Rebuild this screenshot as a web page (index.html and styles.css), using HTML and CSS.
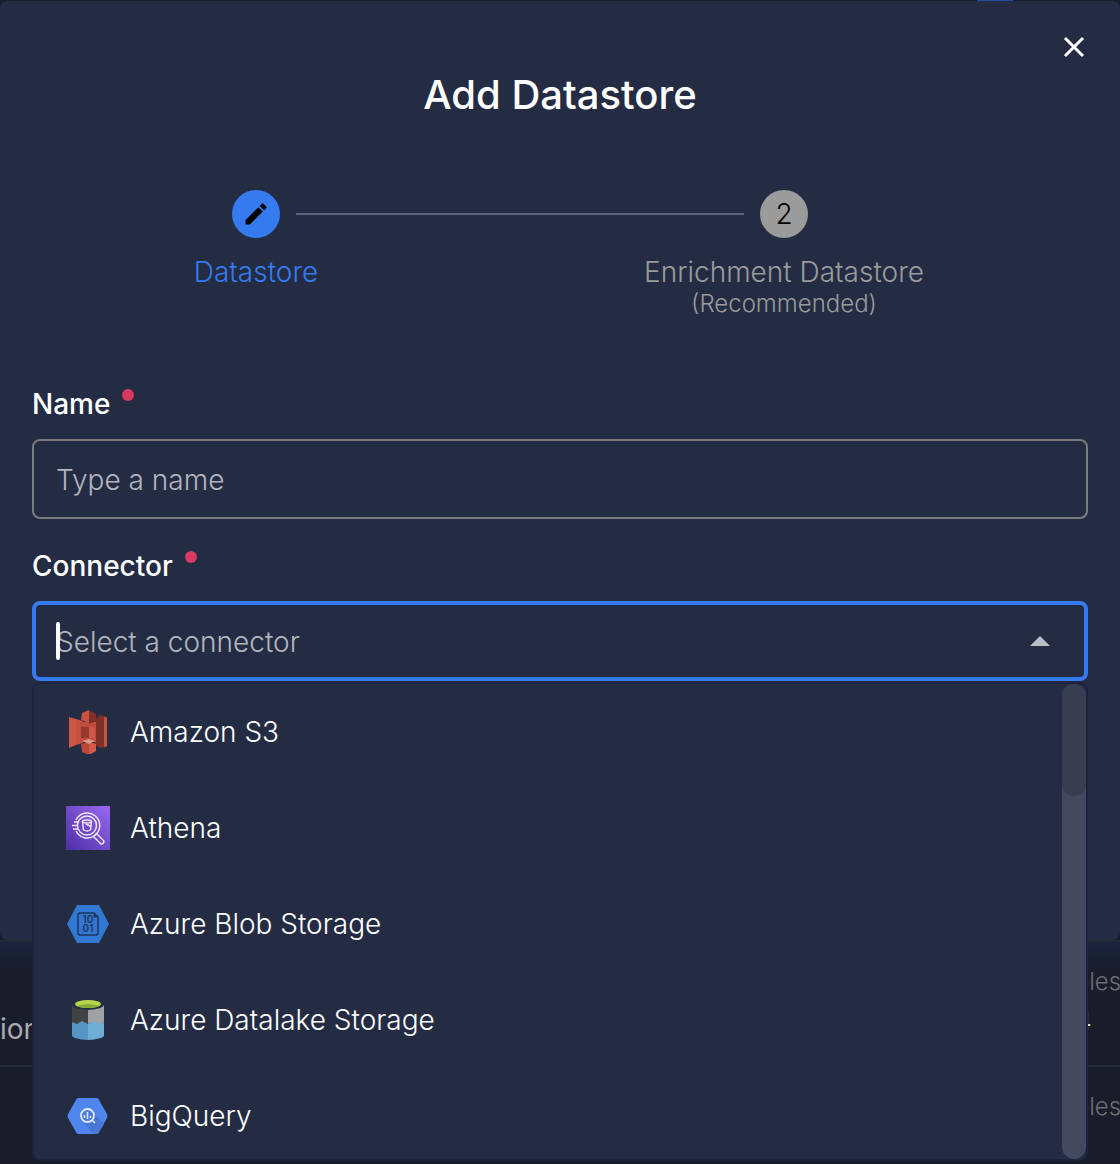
FILE: index.html
```html
<!DOCTYPE html>
<html lang="en">
<head>
<meta charset="utf-8">
<meta name="viewport" content="width=device-width, initial-scale=1">
<title>Add Datastore</title>
<link rel="stylesheet" href="styles.css">
</head>
<body>
<div class="toolbar" aria-hidden="true"><span class="toolbar-action"></span></div>
<main class="dialog" role="dialog" aria-labelledby="dialog-title">
  <header class="dialog-header">
    <button class="close" type="button" aria-label="Close">
      <svg viewBox="0 0 24 24" width="24" height="24"><path d="M3 3L21 21M21 3L3 21" fill="none" stroke="#fff" stroke-width="3"/></svg>
    </button>
    <h1 class="title" id="dialog-title">Add Datastore</h1>
  </header>

  <ol class="stepper">
    <li class="step step-active">
      <div class="step-track">
        <span class="step-side"></span>
        <span class="step-badge">
          <svg viewBox="0 0 24 24" width="28" height="28"><path d="M20.71 7.04c.39-.39.39-1.04 0-1.41l-2.34-2.34c-.37-.39-1.02-.39-1.41 0l-1.84 1.83 3.75 3.75M3 17.25V21h3.75L17.81 9.93l-3.75-3.75L3 17.25z"/></svg>
        </span>
        <span class="step-side step-line"></span>
      </div>
      <span class="step-name">Datastore</span>
    </li>
    <li class="step">
      <div class="step-track">
        <span class="step-side step-line"></span>
        <span class="step-badge">2</span>
        <span class="step-side"></span>
      </div>
      <span class="step-name">Enrichment Datastore</span>
      <span class="step-note">(Recommended)</span>
    </li>
  </ol>

  <form class="form">
    <div class="field">
      <label class="label" for="name">Name<span class="required"></span></label>
      <input class="input" id="name" type="text" placeholder="Type a name">
    </div>
    <div class="field">
      <label class="label" for="connector">Connector<span class="required"></span></label>
      <div class="combo">
        <input class="input input-focused" id="connector" type="text" role="combobox" aria-expanded="true" aria-controls="connector-list" placeholder="Select a connector">
        <span class="caret"></span>
        <svg class="arrow" viewBox="0 0 20 10" width="20" height="10"><path d="M0 10L10 0L20 10z" fill="#bdbfc7"/></svg>
        <div class="menu">
          <ul class="options" id="connector-list">
            <li><button class="option" type="button">
              <svg viewBox="0 0 44 44" width="44" height="44">
                <path d="M3 7L10 9V35L3 38z" fill="#cc5745"/><path d="M10 9L17 11V33L10 35z" fill="#c45040"/>
                <path d="M41 7L34 5L28 10V34L34 38L41 37z" fill="#7d3028"/><path d="M38 7L41 8V36L38 37z" fill="#ca5442"/>
                <path d="M14 12H30V32H14z" fill="#c04d3d"/>
                <path d="M16 3L23 0V13L15 10z" fill="#c95140"/><path d="M23 0L30 4V11L23 14z" fill="#7e3029"/>
                <path d="M15 17H23V28H15z" fill="#96382e"/><path d="M23 16L29 18V28H23z" fill="#ce5947"/>
                <path d="M15 34L23 32V45L16 42z" fill="#b84739"/><path d="M23 32L30 34V41L23 45z" fill="#d15b48"/>
                <path d="M16 31L23 29L29 31L23 34z" fill="#dc9588"/>
              </svg><span>Amazon S3</span></button></li>
            <li><button class="option" type="button">
              <svg viewBox="0 0 44 44" width="44" height="44">
                <defs><linearGradient id="athena" x1="0" y1="1" x2="1" y2="0"><stop offset="0" stop-color="#4d2fa5"/><stop offset="1" stop-color="#9b68f0"/></linearGradient></defs>
                <rect width="44" height="44" fill="url(#athena)"/>
                <g fill="none" stroke="#f1eafd" stroke-width="1.4">
                  <path d="M10 14A12.5 12.5 0 1 1 10 25"/><circle cx="21" cy="19.500" r="9.500"/>
                  <path d="M8 16H12M6 19.500H11M7 23H12"/>
                  <path d="M27.500 30.500L30.500 27.500L38 35Q38 38 35 38z"/>
                  <ellipse cx="21" cy="15.500" rx="4.500" ry="1.500"/><path d="M16.500 15.500L17.500 24Q21 26 24.500 24L25.500 15.500M20 18L25 20.500"/>
                </g>
              </svg><span>Athena</span></button></li>
            <li><button class="option" type="button">
              <svg viewBox="0 0 44 44" width="44" height="44">
                <path d="M11 3H33L43 22L33 41H11L1 22z" fill="#3278d2"/>
                <path d="M14 11H28L32 15V31Q32 33 30 33H14Q12 33 12 31V13Q12 11 14 11z" fill="none" stroke="#20345e" stroke-width="1.500"/>
                <path d="M28 11V15H32z" fill="#20345e" stroke="#20345e"/>
                <text class="bits" x="22" y="21" text-anchor="middle">10</text><text class="bits" x="22" y="30" text-anchor="middle">01</text>
              </svg><span>Azure Blob Storage</span></button></li>
            <li><button class="option" type="button">
              <svg viewBox="0 0 44 44" width="44" height="44">
                <path d="M6 7Q7 11 22 12V27L16 24L11 26L6 24z" fill="#424242"/><path d="M22 12Q37 11 38 7V24L34 27L28 24L22 26z" fill="#a0a1a2"/>
                <path d="M6 24L11 26L16 23L22 26V42Q8 41 6 38z" fill="#5495c3"/><path d="M22 26L28 23L34 26L38 24V38Q36 41 22 42z" fill="#6eaed3"/>
                <ellipse cx="22" cy="6" rx="13" ry="4" fill="#b8d34c"/><path d="M11 8Q22 4 33 8Q29 10 22 10Q15 10 11 8" fill="#88ad36"/>
              </svg><span>Azure Datalake Storage</span></button></li>
            <li><button class="option" type="button">
              <svg viewBox="0 0 44 44" width="44" height="44">
                <path d="M12 4H31Q32 4 33 6L41 20Q42 22 41 24L33 38Q32 40 31 40H12Q11 40 10 38L2 24Q1 22 2 20L10 6Q11 4 12 4z" fill="#5085ee"/>
                <path d="M26 17L38 30L33 38Q32 40 31 40H27L17 28z" fill="#4877d6"/>
                <circle cx="21.500" cy="21.500" r="6.500" fill="#4a7ce0" stroke="#e4ecfc" stroke-width="1.800"/>
                <path d="M26 26L29 29M18.500 21V24M21.500 18V25M24.500 22V24" fill="none" stroke="#e4ecfc" stroke-width="1.500"/>
              </svg><span>BigQuery</span></button></li>
          </ul>
          <div class="scrollbar"><div class="thumb"></div></div>
        </div>
      </div>
    </div>
  </form>
</main>
<section class="listing" aria-hidden="true">
  <div class="row">
    <span class="row-name">ion</span>
    <span class="row-stats"><span class="row-key">Tables</span><span class="row-value">4</span></span>
  </div>
  <div class="row">
    <span></span>
    <span class="row-stats"><span class="row-key">Tables</span></span>
  </div>
</section>
</body>
</html>
```
FILE: styles.css
```css
* {
  box-sizing: border-box;
}

body {
  margin: 0;
  min-height: 100vh;
  overflow: hidden;
  background: #191c2a;
  color: #fff;
  font-family: Inter, "Liberation Sans", sans-serif;
  font-size: 28px;
  font-weight: 300;
  line-height: 32px;
}

button,
input {
  font: inherit;
  color: inherit;
}

ol,
ul {
  margin: 0;
  padding: 0;
  list-style: none;
}

.toolbar {
  display: flex;
  justify-content: flex-end;
  height: 1px;
  padding-right: 107px;
}

.toolbar-action {
  width: 36px;
  background: #1f4f9b;
}

.dialog {
  display: flow-root;
  min-height: 939px;
  padding: 0 32px;
  border-radius: 8px;
  background: #242c44;
}

.dialog-header {
  display: flex;
  flex-direction: column;
  padding-top: 34px;
}

.close {
  display: flex;
  align-self: flex-end;
  margin-right: 2px;
  padding: 0;
  border: 0;
  background: none;
}

.title {
  margin: 12px 0 0;
  font-size: 40px;
  font-weight: 500;
  line-height: 48px;
  text-align: center;
}

.stepper {
  display: grid;
  grid-template-columns: 1fr 1fr;
  margin: 71px 40px 0 -40px;
}

.step {
  display: flex;
  flex-direction: column;
  color: #9b9b9b;
  text-align: center;
}

.step-active {
  color: #357bef;
}

.step-track {
  display: flex;
  align-items: center;
  gap: 16px;
  margin-bottom: 18px;
}

.step-side {
  flex: 1;
}

.step-line {
  height: 2px;
  background: #5f6578;
}

.step-badge {
  display: flex;
  align-items: center;
  justify-content: center;
  width: 48px;
  height: 48px;
  border-radius: 50%;
  background: #9b9b9b;
  color: #000;
}

.step-active .step-badge {
  background: #357bef;
}

.step-note {
  font-size: 24px;
}

.form {
  display: flex;
  flex-direction: column;
  gap: 31px;
  margin-top: 68px;
}

.label {
  display: flex;
  gap: 12px;
  margin-bottom: 19px;
  font-weight: 500;
}

.required {
  width: 12px;
  height: 12px;
  margin-top: 1px;
  border-radius: 50%;
  background: #d83a64;
}

.input {
  display: block;
  width: 100%;
  height: 80px;
  padding: 2px 22px 0;
  border: 2px solid #7c7c7e;
  border-radius: 8px;
  outline: none;
  background: transparent;
}

.input::placeholder {
  color: #b2b5be;
  opacity: 1;
}

.input-focused {
  padding: 2px 20px 0;
  border: 4px solid #357bef;
}

.combo {
  position: relative;
}

.caret {
  position: absolute;
  top: 21px;
  left: 24px;
  width: 4px;
  height: 38px;
  border-radius: 2px;
  background: #fff;
}

.arrow {
  position: absolute;
  top: 35px;
  right: 38px;
}

.menu {
  position: absolute;
  top: calc(100% + 1px);
  left: 0;
  right: 0;
  display: flex;
  max-height: 479px;
  overflow: hidden;
  border: 2px solid #1c2340;
  border-radius: 8px;
  background: #242c44;
}

.options {
  flex: 1;
}

.option {
  display: flex;
  align-items: center;
  gap: 20px;
  width: 100%;
  height: 96px;
  padding: 0 32px;
  border: 0;
  background: none;
  text-align: left;
}

.bits {
  fill: #20345e;
  font-size: 10px;
  font-weight: 600;
}

.scrollbar {
  width: 24px;
  border-radius: 12px;
  background: #43485d;
}

.thumb {
  height: 112px;
  border-radius: 12px;
  background: #393d50;
}

.row {
  display: flex;
  justify-content: space-between;
  height: 125px;
  padding-top: 24px;
  border-top: 2px solid #252a39;
  color: #aaa;
}

.listing .row:first-child {
  background: linear-gradient(#1b243b, #191c2a 30px);
}

.row-name {
  padding-top: 47px;
  font-weight: 400;
}

.row-stats {
  display: flex;
  flex-direction: column;
  gap: 8px;
  width: 72px;
  color: #6c6d74;
  font-size: 24px;
}

.row-value {
  padding-left: 28px;
  color: #ddd;
  font-weight: 400;
}
```
